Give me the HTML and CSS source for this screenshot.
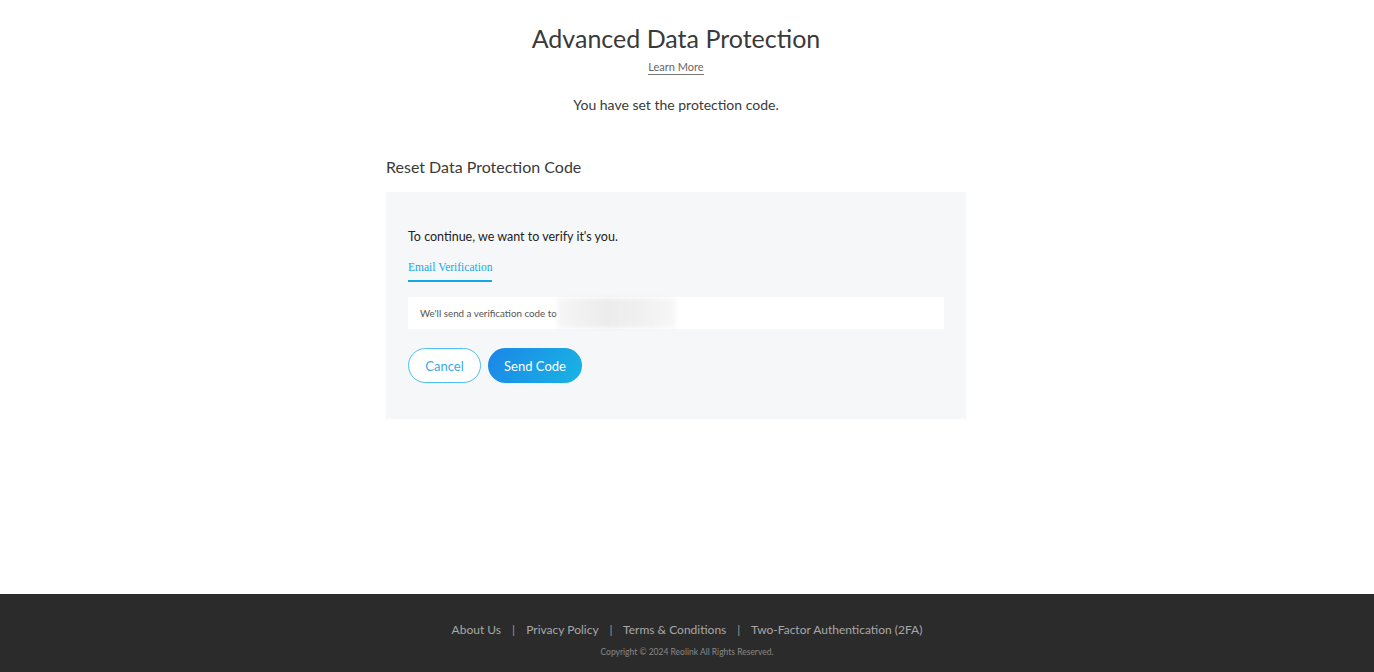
FILE: index.html
```html
<!DOCTYPE html>
<html lang="en">
<head>
    <meta charset="UTF-8">
    <meta name="viewport" content="width=device-width, initial-scale=1.0">
    <title>Advanced Data Protection</title>
    <link rel="stylesheet" href="styles.css">
</head>
<body>
    <div class="page">
        <div class="main">
            <h1 class="title">Advanced Data Protection</h1>
            <div class="learn"><a href="#">Learn More</a></div>
            <p class="status">You have set the protection code.</p>

            <h2 class="section-title">Reset Data Protection Code</h2>
            <div class="panel">
                <p class="intro">To continue, we want to verify it's you.</p>
                <div class="tabs">
                    <span class="tab active">Email Verification</span>
                </div>
                <div class="send-box">
                    We'll send a verification code to
                    <span class="masked"></span>
                </div>
                <div class="actions">
                    <button class="btn btn-cancel">Cancel</button>
                    <button class="btn btn-send">Send Code</button>
                </div>
            </div>
        </div>
    </div>

    <footer class="footer">
        <div class="footer-links">
            <a href="#">About Us</a>
            <span class="sep">|</span>
            <a href="#">Privacy Policy</a>
            <span class="sep">|</span>
            <a href="#">Terms &amp; Conditions</a>
            <span class="sep">|</span>
            <a href="#">Two-Factor Authentication (2FA)</a>
        </div>
        <div class="copyright">Copyright © 2024 Reolink All Rights Reserved.</div>
    </footer>
</body>
</html>
```

FILE: styles.css
```css
body {
    margin: 0;
    font-family: "Lato", "Noto Sans", sans-serif;
    color: #3a3a3a;
    background: white;
}
.page {
    height: 594px;
}
.main {
    width: 580px;
    margin-left: calc(50% - 301px);
    padding-top: 22px;
}
.title {
    margin: 0;
    text-align: center;
    font-size: 25px;
    font-weight: 400;
    color: #3a3a3a;
    line-height: 32px;
}
.learn {
    text-align: center;
    margin-top: 4px;
    line-height: 14px;
}
.learn a {
    font-size: 11px;
    color: #666;
    text-decoration: none;
    border-bottom: 1px solid #777;
    padding-bottom: 1px;
}
.status {
    margin: 22px 0 0;
    text-align: center;
    font-size: 14px;
    color: #3a3a3a;
    line-height: 18px;
}
.section-title {
    margin: 43px 0 0;
    font-size: 16px;
    font-weight: 400;
    color: #3a3a3a;
    line-height: 20px;
}
.panel {
    margin-top: 15px;
    background: #f6f7f9;
    padding: 36px 22px 36px;
}
.intro {
    margin: 0;
    font-size: 12.5px;
    color: #222;
    line-height: 18px;
}
.tabs {
    margin-top: 9px;
}
.tab {
    display: inline-block;
    font-family: "Liberation Serif", serif;
    font-size: 11.5px;
    color: #13a9e4;
    padding-bottom: 6px;
    line-height: 14px;
}
.tab.active {
    border-bottom: 2px solid #13a9e4;
}
.send-box {
    margin-top: 15px;
    background: white;
    height: 32px;
    padding-left: 12px;
    display: flex;
    align-items: center;
    font-size: 9.8px;
    color: #555;
}
.masked {
    display: inline-block;
    width: 118px;
    height: 30px;
    margin-left: 1px;
    background: linear-gradient(90deg, #f6f6f6, #ececec 40%, #f0f0f0 70%, #f7f7f7);
    filter: blur(2px);
}
.actions {
    margin-top: 19px;
    display: flex;
    gap: 7px;
}
.btn {
    height: 35px;
    border-radius: 18px;
    font-family: inherit;
    font-size: 13px;
    cursor: pointer;
}
.btn-cancel {
    width: 73px;
    background: white;
    border: 1px solid #4fc0eb;
    color: #3aa9e6;
}
.btn-send {
    width: 94px;
    border: none;
    color: white;
    background: linear-gradient(120deg, #1c86e8, #18b4e3);
}
.footer {
    background: #2b2b2b;
    height: 78px;
    text-align: center;
    padding-top: 28px;
    box-sizing: border-box;
}
.footer-links {
    font-size: 12px;
    line-height: 16px;
    color: #9a9a9a;
}
.footer-links a {
    color: #a8a8a8;
    text-decoration: none;
}
.sep {
    margin: 0 8px;
}
.copyright {
    margin-top: 9px;
    font-size: 8.5px;
    color: #888;
}
```
